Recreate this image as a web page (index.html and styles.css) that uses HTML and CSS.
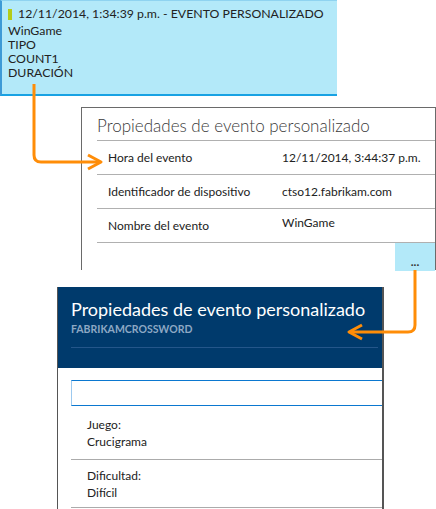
FILE: index.html
```html
<!DOCTYPE html>
<html lang="es">
<head>
  <meta charset="UTF-8" />
  <title>Evento personalizado</title>
  <link rel="stylesheet" href="styles.css">
</head>
<body>
<div class="page">

  <!-- fila del evento en la lista -->
  <div class="event-row">
    <div class="event-title"><span class="marker"></span>12/11/2014, 1:34:39 p.m. - EVENTO PERSONALIZADO</div>
    <div class="event-line">WinGame</div>
    <div class="event-line">TIPO</div>
    <div class="event-line">COUNT1</div>
    <div class="event-line">DURACIÓN</div>
  </div>

  <!-- panel de propiedades -->
  <div class="props">
    <h2 class="props-title">Propiedades de evento personalizado</h2>
    <div class="props-row">
      <span class="props-label">Hora del evento</span>
      <span class="props-value">12/11/2014, 3:44:37 p.m.</span>
    </div>
    <div class="props-row">
      <span class="props-label">Identificador de dispositivo</span>
      <span class="props-value">ctso12.fabrikam.com</span>
    </div>
    <div class="props-row">
      <span class="props-label">Nombre del evento</span>
      <span class="props-value up">WinGame</span>
    </div>
    <div class="props-footer">
      <button class="more-btn">...</button>
    </div>
  </div>

  <!-- hoja de detalle -->
  <div class="blade">
    <div class="blade-header">
      <h1 class="blade-title">Propiedades de evento personalizado</h1>
      <div class="blade-sub">FABRIKAMCROSSWORD</div>
    </div>
    <div class="blade-body">
      <div class="search-box"></div>
      <div class="blade-item">
        <div>Juego:</div>
        <div>Crucigrama</div>
      </div>
      <div class="blade-item">
        <div>Dificultad:</div>
        <div>Difícil</div>
      </div>
    </div>
  </div>

  <svg class="arrows" width="436" height="509" viewBox="0 0 436 509">
    <path d="M34 84 V155 Q34 162 41 162 H100" />
    <path d="M88 155 L101 162 L88 169" />
    <path d="M415 270 V325 Q415 332 408 332 H350" />
    <path d="M362 325 L349 332 L362 339" />
  </svg>
</div>
</body>
</html>
```

FILE: styles.css
```css
* {
  box-sizing: border-box;
}

body {
  margin: 0;
  background: #ffffff;
  font-family: Lato, "Liberation Sans", Arial, sans-serif;
  color: #222222;
  overflow: hidden;
}

.page {
  position: relative;
  width: 436px;
  height: 509px;
}

.event-row {
  width: 337px;
  height: 96px;
  background: #b3e9f9;
  border-top: 1px solid #8fd3f0;
  border-left: 2px solid #3d9ad6;
  border-bottom: 2px solid #18a2e3;
  padding: 6px 0 0 6px;
  font-size: 12.3px;
  line-height: 14px;
}

.event-title {
  display: flex;
  align-items: center;
  gap: 6px;
  margin-bottom: 3px;
}

.marker {
  display: inline-block;
  width: 4px;
  height: 11px;
  background: #b4cc19;
}

.props {
  margin: 11px 0 0 81px;
  width: 355px;
  height: 163px;
  border: 1px solid #6a6a6a;
  border-bottom: none;
  padding-left: 15px;
}

.props-title {
  margin: 0;
  height: 33px;
  padding-top: 7px;
  font-size: 17px;
  font-weight: 300;
  color: #3a3a3a;
  border-bottom: 1px solid #b0b0b0;
}

.props-row {
  display: flex;
  height: 34px;
  align-items: center;
  border-bottom: 1px solid #b0b0b0;
  padding-left: 11px;
  font-size: 12px;
}

.props-label {
  width: 174px;
}

.props-value.up {
  margin-top: -6px;
}

.props-footer {
  display: flex;
  justify-content: flex-end;
}

.more-btn {
  width: 40px;
  height: 28px;
  background: #b3e9f9;
  border: none;
  padding: 8px 0 0;
  font-family: inherit;
  font-size: 12px;
  font-weight: bold;
  color: #333333;
}

.blade {
  margin: 17px 0 0 57px;
  width: 327px;
  height: 222px;
  border-left: 1px solid #555555;
  border-right: 2px solid #555555;
}

.blade-header {
  height: 81px;
  background: #003a6c;
  padding: 10px 4px 0 13px;
}

.blade-title {
  margin: 0;
  font-size: 18px;
  font-weight: normal;
  color: #ffffff;
  line-height: 24px;
  white-space: nowrap;
}

.blade-sub {
  margin-top: 2px;
  padding-bottom: 12px;
  font-size: 10.5px;
  font-weight: bold;
  color: #8da8c4;
  border-bottom: 1px solid #24568a;
}

.blade-body {
  padding: 12px 0 0 13px;
}

.search-box {
  height: 26px;
  border-top: 1px solid #0b78d0;
  border-bottom: 1px solid #0b78d0;
  border-left: 1px solid #9cc9ef;
}

.blade-item {
  height: 54px;
  padding: 10px 0 0 16px;
  border-bottom: 1px solid #ababab;
  font-size: 12px;
  line-height: 17px;
}

.blade-item + .blade-item {
  height: 48px;
  padding-top: 7px;
}

.arrows {
  position: absolute;
  top: 0;
  left: 0;
  pointer-events: none;
}

.arrows path {
  fill: none;
  stroke: #ff8d08;
  stroke-width: 3;
  stroke-linejoin: round;
}
```
